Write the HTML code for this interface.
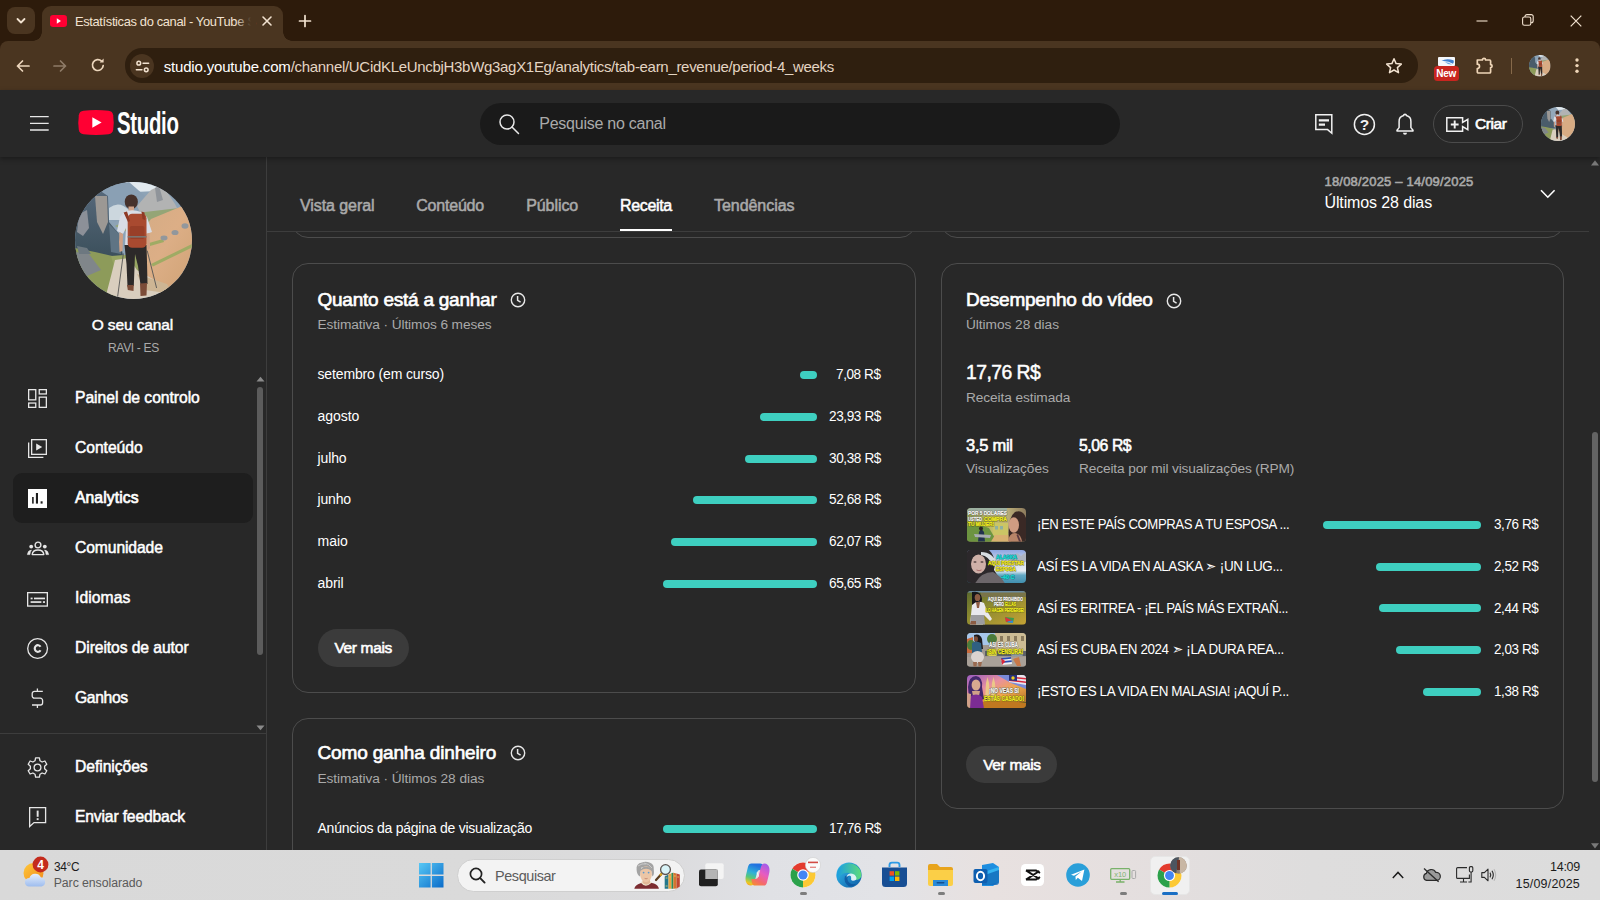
<!DOCTYPE html>
<html lang="pt">
<head>
<meta charset="utf-8">
<title>Estatísticas do canal - YouTube Studio</title>
<style>
*{box-sizing:border-box;margin:0;padding:0}
html,body{width:1600px;height:900px;overflow:hidden;background:#282828}
body{font-family:"Liberation Sans",sans-serif;color:#fff;position:relative;-webkit-font-smoothing:antialiased}
.abs{position:absolute}
.t{position:absolute;white-space:nowrap;line-height:1;transform-origin:0 50%}
svg{position:absolute;overflow:visible}
/* ---------- browser chrome ---------- */
#tabstrip{left:0;top:0;width:1600px;height:52px;background:#2d1b0b}
#toolbar{left:0;top:41px;width:1600px;height:49px;background:#4a3520;border-radius:8px 8px 0 0}
#tabsearch{left:7px;top:7px;width:28px;height:27px;border-radius:8px;background:#4a3520}
#tab{left:42px;top:6px;width:241px;height:36px;background:#4a3520;border-radius:9px 9px 0 0}
#tab:before,#tab:after{content:"";position:absolute;bottom:1px;width:9px;height:9px;background:radial-gradient(circle at 0 0,rgba(0,0,0,0) 8.5px,#4a3520 9px)}
#tab:before{left:-9px}
#tab:after{right:-9px;transform:scaleX(-1)}
#urlbar{left:125px;top:48.3px;width:1293px;height:34.4px;border-radius:17px;background:#2f1f0f}
#siteinfo{left:130px;top:54px;width:24px;height:24px;border-radius:12px;background:#4a3520}
/* ---------- yt header ---------- */
#ythead{left:0;top:90px;width:1600px;height:67px;background:#282828;box-shadow:0 2px 5px rgba(0,0,0,.35);z-index:5}
#search{left:480px;top:103px;width:640px;height:42px;border-radius:21px;background:#1a1a1a;z-index:6}
#criar{left:1433px;top:105px;width:90px;height:38px;border-radius:19px;border:1px solid #4b4b4b;z-index:6}
.z6{z-index:6}
/* ---------- sidebar ---------- */
#sidebar{left:0;top:157px;width:267px;height:693px;border-right:1px solid #3d3d3d;background:#282828}
#navsel{left:13px;top:473px;width:240px;height:49.6px;border-radius:9px;background:#1e1e1e}
#navdiv{left:0;top:733px;width:266px;height:1px;background:#3d3d3d}
.nav{font-size:15.7px;-webkit-text-stroke:.5px;color:#fff;left:75px;letter-spacing:-.35px}
/* ---------- content ---------- */
.card{position:absolute;border:1px solid #4c4c4c;border-radius:16px;background:#282828}
.h{font-size:19px;-webkit-text-stroke:.65px;letter-spacing:-.45px}
.sub{font-size:13.7px;color:#aaa;letter-spacing:-.1px}
.row{font-size:14px;color:#fff;letter-spacing:-.15px}
.val{font-size:14px;color:#fff;letter-spacing:-.3px;text-align:right}
.bar{position:absolute;height:8px;border-radius:4px;background:#3ecfc0}
.btn{position:absolute;height:38px;border-radius:19px;background:#3b3b3b}
.tab{font-size:16px;-webkit-text-stroke:.52px;color:#aaa;letter-spacing:-.4px}
.thumb{position:absolute;width:59px;height:33px;border-radius:4px;overflow:hidden}
/* ---------- taskbar ---------- */
#taskbar{left:0;top:850px;width:1600px;height:50px;background:linear-gradient(90deg,#d9d9d9 0,#dadada 30%,#dcdcde 42%,#e0e1e5 48%,#e2e3e7 55%,#e8e1e0 62%,#e5dfdf 70%,#dedddd 82%,#dcdcdc 100%)}
#tsearch{left:457px;top:858.6px;width:228.3px;height:33.1px;border-radius:17px;background:#f3f3f3;border:1px solid #cfcfcf}
.tk{color:#1b1b1b;font-size:12px}
</style>
</head>
<body>
<div class="abs" id="tabstrip"></div>
<div class="abs" id="toolbar"></div>
<div class="abs" id="tabsearch"></div>
<svg style="left:15px;top:15px" width="12" height="12" viewBox="0 0 12 12"><path d="M2.5 4 L6 7.5 L9.5 4" fill="none" stroke="#f2e2d0" stroke-width="1.8" stroke-linecap="round" stroke-linejoin="round"/></svg>
<div class="abs" id="tab"></div>
<svg style="left:50px;top:15px" width="17" height="12" viewBox="0 0 17 12"><rect x="0" y="0" width="17" height="12" rx="3.2" fill="#ff0033"/><path d="M6.8 3.3 L11 6 L6.8 8.7Z" fill="#fff"/></svg>
<span class="t" style="letter-spacing:-0.364px;transform:scaleX(0.9920);left:75px;top:14.5px;font-size:13px;color:#f2e2d0">Estatísticas do canal - YouTube</span><span class="t" style="left:247.5px;top:14.5px;font-size:13px;color:#f2e2d0">S</span>
<div class="abs" style="left:236px;top:10px;width:20px;height:24px;background:linear-gradient(90deg,rgba(74,53,32,0),#4a3520 75%)"></div>
<svg style="left:261px;top:15px" width="12" height="12" viewBox="0 0 12 12"><path d="M2 2 L10 10 M10 2 L2 10" fill="none" stroke="#f2e2d0" stroke-width="1.6" stroke-linecap="round"/></svg>
<svg style="left:298px;top:14px" width="14" height="14" viewBox="0 0 14 14"><path d="M7 1.5 V12.5 M1.5 7 H12.5" fill="none" stroke="#f2e2d0" stroke-width="1.7" stroke-linecap="round"/></svg>
<!-- window controls -->
<svg style="left:1476px;top:15px" width="12" height="12" viewBox="0 0 12 12"><path d="M0.5 6 H11.5" stroke="#f2e2d0" stroke-width="1.1"/></svg>
<svg style="left:1522px;top:14px" width="12" height="12" viewBox="0 0 12 12"><rect x="0.6" y="3" width="8.2" height="8.2" rx="1.8" fill="none" stroke="#f2e2d0" stroke-width="1.1"/><path d="M3 3 V2.6 A2 2 0 0 1 5 0.6 H9.2 A2 2 0 0 1 11.2 2.6 V6.8 A2 2 0 0 1 9.2 8.8 H8.8" fill="none" stroke="#f2e2d0" stroke-width="1.1"/></svg>
<svg style="left:1570px;top:15px" width="12" height="12" viewBox="0 0 12 12"><path d="M0.7 0.7 L11.3 11.3 M11.3 0.7 L0.7 11.3" stroke="#f2e2d0" stroke-width="1.2"/></svg>
<!-- nav buttons -->
<svg style="left:15px;top:58px" width="16" height="16" viewBox="0 0 16 16"><path d="M14 8 H2.5 M7.5 3 L2.5 8 L7.5 13" fill="none" stroke="#ecd6bc" stroke-width="1.7" stroke-linecap="round" stroke-linejoin="round"/></svg>
<svg style="left:52px;top:58px" width="16" height="16" viewBox="0 0 16 16"><path d="M2 8 H13.5 M8.5 3 L13.5 8 L8.5 13" fill="none" stroke="#8e7b67" stroke-width="1.7" stroke-linecap="round" stroke-linejoin="round"/></svg>
<svg style="left:90px;top:57px" width="16" height="16" viewBox="0 0 16 16"><path d="M13.2 8.6 A5.4 5.4 0 1 1 11.6 4.2" fill="none" stroke="#ecd6bc" stroke-width="1.7" stroke-linecap="round"/><path d="M13.6 1.6 V5.6 H9.6Z" fill="#ecd6bc"/></svg>
<div class="abs" id="urlbar"></div>
<div class="abs" id="siteinfo"></div>
<svg style="left:134.5px;top:59.5px" width="15" height="13" viewBox="0 0 16 14"><g fill="none" stroke="#f2e2d0" stroke-width="1.6" stroke-linecap="round"><circle cx="4" cy="3.4" r="2"/><path d="M8.6 3.4 H14.6"/><circle cx="12" cy="10.6" r="2"/><path d="M1.4 10.6 H7.4"/></g></svg>
<span class="t" style="letter-spacing:-0.171px;left:163.7px;top:58.5px;font-size:15px;color:#fff">studio.youtube.com</span><span class="t" style="letter-spacing:-0.305px;left:290.7px;top:58.5px;font-size:15px;color:#e4d5c3">/channel/UCidKLeUncbjH3bWg3agX1Eg/analytics/tab-earn_revenue/period-4_weeks</span>
<svg style="left:1385px;top:57px" width="18" height="18" viewBox="0 0 18 18"><path d="M9 1.8 L11.1 6.6 L16.3 7.1 L12.4 10.6 L13.5 15.7 L9 13 L4.5 15.7 L5.6 10.6 L1.7 7.1 L6.9 6.6Z" fill="none" stroke="#f2e2d0" stroke-width="1.5" stroke-linejoin="round"/></svg>
<!-- extension w/ New badge -->
<svg style="left:1438px;top:57.4px" width="17" height="9" viewBox="0 0 17 9"><rect width="17" height="9" rx="1" fill="#f4f7fb"/><path d="M3.500 4 Q8 0.800 15.500 3.200 Q16.500 5 15 6.800 Q10 3.400 3.500 4Z" fill="#3f7fd0"/><path d="M7 5 Q11 5.200 14 7.500 Q10 7.800 7 5Z" fill="#6aa6e6"/></svg>
<div class="abs" style="left:1433.700px;top:66px;width:25.500px;height:14.500px;border-radius:3.500px;background:#c9251f"></div>
<span class="t" style="letter-spacing:-0.254px;top:69.13px;left:1436.200px;font-size:10px;font-weight:bold;color:#fff">New</span>
<svg style="left:1475px;top:56px" width="20" height="19" viewBox="0 0 20 19"><path d="M2.300 4 H7.400 A1.600 1.600 0 0 1 10.600 4 H14.600 A1 1 0 0 1 15.600 5 V8.600 A1.500 1.500 0 0 1 15.600 11.600 V16 A1 1 0 0 1 14.600 17 H3.300 A1 1 0 0 1 2.300 16 V12.600 A2.200 2.200 0 0 0 2.300 8.200Z" fill="none" stroke="#efd6b8" stroke-width="1.700" stroke-linejoin="round"/></svg>
<div class="abs" style="left:1511px;top:57.500px;width:1px;height:16px;background:#86694a"></div>
<svg style="left:1529px;top:54.600px" width="21.500" height="21.500" viewBox="0 0 117 117"><defs><clipPath id="avc0"><circle cx="58.500" cy="58.500" r="58.500"/></clipPath></defs><g clip-path="url(#avc0)"><rect width="117" height="117" fill="#8da3b6"/><path d="M50 0 H84 L82 9 L60 10Z" fill="#e2eaef"/><path d="M62 24 L76 8 L84 4 L92 10 L100 22 L104 30 L70 40Z" fill="#b2b3b3"/><path d="M40 44 L70 30 L104 26 L110 34 L76 40 L56 52Z" fill="#94a576"/><path d="M0 12 L24 8 L33 14 L34 40 L44 52 L48 74 L0 74Z" fill="#4a5c6a"/><path d="M117 20 L76 37 L62 56 L58 88 L82 110 L100 117 L117 117Z" fill="#d8ac84"/><path d="M0 66 L20 70 L46 76 L52 90 L40 117 H0Z" fill="#8d9b5a"/><path d="M30 117 L36 94 L40 78 L54 76 L62 88 L90 104 L96 117Z" fill="#d9cebe"/><use href="#hiker"/></g></svg>
<svg style="left:1574px;top:57px" width="6" height="18" viewBox="0 0 6 18"><g fill="#efd6b8"><circle cx="3" cy="3" r="1.700"/><circle cx="3" cy="8.600" r="1.700"/><circle cx="3" cy="14.300" r="1.700"/></g></svg>

<div class="abs" id="ythead"></div>
<svg class="z6" style="left:30px;top:115px" width="19" height="16" viewBox="0 0 19 16"><path d="M0 1.7 H18.7 M0 8.3 H18.7 M0 15 H18.7" stroke="#e8e8e8" stroke-width="1.3"/></svg>
<svg class="z6" style="left:78px;top:110px" width="36" height="25" viewBox="0 0 36 25"><path d="M5.5 0.8 Q18 -0.6 30.5 0.8 Q34.6 1.3 35.2 5.2 Q36.2 12.5 35.2 19.8 Q34.6 23.7 30.5 24.2 Q18 25.6 5.5 24.2 Q1.4 23.7 0.8 19.8 Q-0.2 12.5 0.8 5.2 Q1.4 1.3 5.5 0.8Z" fill="#ff0033"/><path d="M14.3 7.2 L23.6 12.5 L14.3 17.8Z" fill="#fff"/></svg>
<span class="t z6" id="studio" style="left:117.3px;top:108.4px;font-size:30.5px;font-weight:bold;color:#fff;transform:scaleX(.67);letter-spacing:-.5px">Studio</span>
<div class="abs" id="search"></div>
<svg class="z6" style="left:498px;top:113px" width="22" height="22" viewBox="0 0 22 22"><circle cx="9" cy="9" r="7" fill="none" stroke="#e8e8e8" stroke-width="1.5"/><path d="M14 14 L20.5 20.5" stroke="#e8e8e8" stroke-width="1.5" stroke-linecap="round"/></svg>
<span class="t z6" style="letter-spacing:-0.251px;left:539.3px;top:116px;font-size:16px;color:#aaa">Pesquise no canal</span>
<!-- comment icon -->
<svg class="z6" style="left:1315px;top:113.6px" width="18" height="21" viewBox="0 0 18 21"><path d="M0.8 0.8 H16.8 V19.2 L12.6 15.6 H0.8Z" fill="none" stroke="#f1f1f1" stroke-width="1.5" stroke-linejoin="miter"/><path d="M3.800 6.400 H14 M3.800 10.600 H10" stroke="#f1f1f1" stroke-width="2.200"/></svg>
<!-- help -->
<svg class="z6" style="left:1353px;top:113px" width="23" height="23" viewBox="0 0 23 23"><circle cx="11.4" cy="11.4" r="10" fill="none" stroke="#f1f1f1" stroke-width="1.5"/><text x="11.4" y="17" text-anchor="middle" font-family="Liberation Sans, sans-serif" font-weight="bold" font-size="15.5" fill="#f1f1f1">?</text></svg>
<!-- bell -->
<svg class="z6" style="left:1396px;top:113px" width="18" height="23" viewBox="0 0 18 23"><path d="M9 1.2 A1.3 1.3 0 0 1 10.3 2.6 A6 6 0 0 1 14.9 8.6 V14.6 L17 17.2 V18 H1 V17.2 L3.1 14.6 V8.6 A6 6 0 0 1 7.7 2.6 A1.3 1.3 0 0 1 9 1.2Z" fill="none" stroke="#f1f1f1" stroke-width="1.5" stroke-linejoin="round"/><path d="M7 19.8 A2 2 0 0 0 11 19.8Z" fill="#f1f1f1"/></svg>
<div class="abs" id="criar"></div>
<svg class="z6" style="left:1446px;top:117px" width="23" height="15" viewBox="0 0 23 15"><path d="M0.8 0.8 H16.6 V5.4 L21.8 2.4 V12.6 L16.6 9.6 V14.2 H0.8Z" fill="none" stroke="#f1f1f1" stroke-width="1.5" stroke-linejoin="miter"/><path d="M8.7 3.6 V11.4 M4.8 7.5 H12.6" stroke="#f1f1f1" stroke-width="1.9"/></svg>
<span class="t z6" style="letter-spacing:-0.434px;left:1475px;top:116.3px;font-size:15.5px;-webkit-text-stroke:.6px;color:#fff">Criar</span>
<svg class="z6" style="left:1540.500px;top:107px" width="34" height="34" viewBox="0 0 117 117"><defs><clipPath id="avc"><circle cx="58.500" cy="58.500" r="58.500"/></clipPath></defs><g clip-path="url(#avc)"><rect width="117" height="117" fill="#93a8ba"/><path d="M50 0 H84 L82 9 L60 10Z" fill="#e2eaef"/><path d="M62 24 L76 8 L84 4 L92 10 L100 22 L104 30 L70 40Z" fill="#b2b3b3"/><path d="M40 44 L70 30 L104 26 L110 34 L76 40 L56 52Z" fill="#94a576"/><path d="M0 12 L24 8 L33 14 L34 40 L44 52 L48 74 L0 74Z" fill="#4a5c6a"/><path d="M20 14 L32 14 L33 40 L28 52 L22 40Z" fill="#9c9894"/><path d="M117 20 L76 37 L62 56 L58 88 L82 110 L100 117 L117 117Z" fill="#d8ac84"/><path d="M0 66 L20 70 L46 76 L52 90 L40 117 H0Z" fill="#8d9b5a"/><path d="M0 70 L14 72 L26 88 L12 94 L0 90Z" fill="#80868a"/><path d="M30 117 L36 94 L40 78 L54 76 L62 88 L90 104 L96 117Z" fill="#d9cebe"/><use href="#hiker"/></g></svg>

<div class="abs" id="sidebar"></div>
<!-- channel avatar -->
<svg style="left:75px;top:181.5px" width="117" height="117" viewBox="0 0 117 117"><defs><clipPath id="avc2"><circle cx="58.5" cy="58.5" r="58.5"/></clipPath><linearGradient id="slope" x1="0" y1="0" x2="1" y2="1"><stop offset="0" stop-color="#d2ab85"/><stop offset=".5" stop-color="#dcae86"/><stop offset="1" stop-color="#cfa274"/></linearGradient><linearGradient id="cliff" x1="0" y1="0" x2="0" y2="1"><stop offset="0" stop-color="#56687a"/><stop offset="1" stop-color="#3c505c"/></linearGradient><g id="hiker"><ellipse cx="56.300" cy="19.800" rx="6.600" ry="7.400" fill="#46322c"/><rect x="53.500" y="24.500" width="5.500" height="5" fill="#d2a48a"/><path d="M49 30 Q57 26.500 66 30 L72 35 L77 50 L71.500 52 L70 44 L70 64 H50 L51 46 L48 52 L42 49 L45 35Z" fill="#d9dde6"/><path d="M44.500 50 L48 52 L47.500 69 L44.500 70 L44 60Z M71.800 51.500 L74.400 51 L75 66 L72.500 68.600Z" fill="#cfa085"/><path d="M49.500 63 H71.500 L72 80 L72.500 102 L65.500 103 L63 84 L60 72 L58.800 104 L52.500 104.500 L51.500 82Z" fill="#2c2929"/><path d="M52 103 H58.800 L58.500 109 L52.800 108Z M65 101.500 L72 101 L71.500 113.500 L65.500 114Z" fill="#7c4c38"/><rect x="52.700" y="31.800" width="18.800" height="33.900" rx="4.500" fill="#a94a30"/><rect x="54.700" y="44" width="14.800" height="13" rx="2" fill="#983f28"/><rect x="52.700" y="54" width="18.800" height="1.600" fill="#7a7470"/><path d="M48.600 30.500 L52 29.500 L55 39 L53 40Z M66.500 29.500 L69.500 30.500 L70 38 L67.500 37Z" fill="#8e3a26"/></g></defs><g clip-path="url(#avc2)"><rect width="117" height="117" fill="#8da3b6"/><path d="M50 0 H84 L82 9 L60 10Z" fill="#e2eaef"/><path d="M28 4 L54 0 L70 14 L62 30 L40 40 L28 34Z" fill="#8aa0b4"/><path d="M34 26 Q44 18 54 28 L52 38 L34 38Z" fill="#ccd7de"/><path d="M62 24 L76 8 L84 4 L92 10 L100 22 L104 30 L70 40Z" fill="#b2b3b3"/><path d="M80 6 L84 4 L88 18 L82 20Z" fill="#8f949a"/><path d="M40 44 L70 30 L104 26 L110 34 L76 40 L56 52Z" fill="#94a576"/><path d="M0 12 L24 8 L33 14 L34 40 L44 52 L48 74 L0 74Z" fill="url(#cliff)"/><path d="M20 14 L32 14 L33 40 L28 52 L22 40Z" fill="#9c9894"/><path d="M4 32 L12 28 L14 46 L8 54 L2 50Z" fill="#8c9098"/><path d="M34 42 L44 52 L46 72 L36 70Z" fill="#5f7484"/><path d="M117 20 L76 37 L62 56 L58 88 L82 110 L100 117 L117 117Z" fill="url(#slope)"/><path d="M76 82 L117 62 V65.500 L78 84.500Z" fill="#9fab64"/><path d="M74 61 L88 57 L89 60 L75 64Z" fill="#9fab64"/><ellipse cx="110" cy="44" rx="3.500" ry="2.800" fill="#92979c"/><ellipse cx="100" cy="50.500" rx="3.500" ry="2.600" fill="#92979c"/><ellipse cx="89" cy="56" rx="3.500" ry="2.400" fill="#92979c"/><path d="M0 66 L20 70 L46 76 L52 90 L40 117 H0Z" fill="#8d9b5a"/><path d="M36 74 L62 72 L66 90 L40 88Z" fill="#97a562"/><path d="M0 70 L14 72 L26 88 L12 94 L0 90Z" fill="#80868a"/><path d="M2 64 L12 66 L16 72 L4 72Z" fill="#6d7880"/><path d="M30 117 L36 94 L40 78 L54 76 L62 88 L90 104 L96 117Z" fill="#d9cebe"/><path d="M62 92 L92 102 L98 112 L70 108Z" fill="#cdb594"/><path d="M48.400 71.500 L42.600 114.800 M72.200 68.600 L81.600 106" stroke="#555" stroke-width=".9"/><use href="#hiker"/></g></svg>
<span class="t" style="letter-spacing:-0.120px;top:317.38px;left:91.7px;font-size:15.5px;-webkit-text-stroke:.45px;color:#fff">O seu canal</span>
<span class="t" style="letter-spacing:-0.364px;transform:scaleX(0.9254);top:341.40px;left:107.5px;font-size:13px;color:#aaa">RAVI - ES</span>
<!-- sidebar scrollbar -->
<svg style="left:256px;top:376px" width="9" height="6" viewBox="0 0 9 6"><path d="M0.5 5.5 L4.5 0.8 L8.5 5.5Z" fill="#8a8a8a"/></svg>
<div class="abs" style="left:257px;top:387px;width:6px;height:268px;border-radius:3px;background:#5c5c5c"></div>
<svg style="left:256px;top:725px" width="9" height="6" viewBox="0 0 9 6"><path d="M0.5 0.5 L4.5 5.2 L8.5 0.5Z" fill="#8a8a8a"/></svg>
<div class="abs" id="navsel"></div>
<div class="abs" id="navdiv"></div>
<!-- icons -->
<svg style="left:28px;top:389px" width="19" height="19" viewBox="0 0 19 19"><g fill="none" stroke="#e6e6e6" stroke-width="1.3"><rect x="0.65" y="0.65" width="7.1" height="10.2"/><rect x="11.25" y="0.65" width="7.1" height="4.3"/><rect x="0.65" y="14.05" width="7.1" height="4.3"/><rect x="11.25" y="8.15" width="7.1" height="10.2"/></g></svg>
<svg style="left:28px;top:439px" width="19" height="19" viewBox="0 0 19 19"><g fill="none" stroke="#e6e6e6" stroke-width="1.3"><rect x="3.65" y="0.65" width="14.7" height="14.7"/><path d="M0.65 3.6 V18.35 H15.4"/></g><path d="M8.2 4.4 L14.2 8 L8.2 11.6Z" fill="#e6e6e6"/></svg>
<svg style="left:28px;top:489px" width="19" height="19" viewBox="0 0 19 19"><rect width="19" height="19" fill="#fff"/><rect x="4.1" y="8" width="1.6" height="6.6" fill="#1e1e1e"/><rect x="7.9" y="4" width="2.1" height="10.6" fill="#1e1e1e"/><rect x="12.6" y="12.3" width="2" height="2.3" fill="#1e1e1e"/></svg>
<svg style="left:27px;top:541px" width="22" height="15" viewBox="0 0 22 15"><g fill="none" stroke="#e6e6e6" stroke-width="1.4"><circle cx="11" cy="4" r="2.9"/><path d="M5.2 13.6 Q5.6 9 11 9 Q16.4 9 16.8 13.6Z" stroke-linejoin="round"/></g><circle cx="4.2" cy="5.6" r="1.9" fill="#e6e6e6"/><circle cx="17.8" cy="5.6" r="1.9" fill="#e6e6e6"/><path d="M0.4 13.6 Q0.8 9.4 4.4 9 Q3 11 2.9 13.6Z M21.6 13.6 Q21.2 9.4 17.6 9 Q19 11 19.1 13.6Z" fill="#e6e6e6" stroke="#e6e6e6" stroke-width=".6"/></svg>
<svg style="left:27px;top:592px" width="21" height="15" viewBox="0 0 21 15"><rect x="0.65" y="0.65" width="19.7" height="13.4" fill="none" stroke="#e6e6e6" stroke-width="1.3"/><g fill="#e6e6e6"><rect x="3.6" y="5.6" width="2" height="1.7"/><rect x="7" y="5.6" width="11" height="1.7"/><rect x="3.6" y="9.2" width="10.8" height="1.7"/><rect x="15.9" y="9.2" width="2.1" height="1.7"/></g></svg>
<svg style="left:27px;top:638px" width="22" height="22" viewBox="0 0 22 22"><circle cx="10.6" cy="10.5" r="9.9" fill="none" stroke="#e6e6e6" stroke-width="1.3"/><path d="M13.500 8.800 A3.100 3.300 0 1 0 13.500 12.200" fill="none" stroke="#e6e6e6" stroke-width="2.200"/></svg>
<svg style="left:31px;top:688px" width="13" height="21" viewBox="0 0 13 21"><path d="M11.8 3.4 H3.4 A2.2 2.2 0 0 0 1.2 5.6 V8 A2.2 2.2 0 0 0 3.4 10.2 H9.4 A2.2 2.2 0 0 1 11.6 12.4 V14.8 A2.2 2.2 0 0 1 9.4 17 H1 M6.4 0.6 V3.4 M6.4 17 V20" fill="none" stroke="#e6e6e6" stroke-width="1.3"/></svg>
<svg style="left:27px;top:757px" width="21" height="22" viewBox="-10.5 -11 21 22"><path id="gear" fill="none" stroke="#e6e6e6" stroke-width="1.3" stroke-linejoin="round" d="M-1.9 -10.1 H1.9 L2.5 -7.2 L4.6 -6 L7.4 -7 L9.3 -3.7 L7.1 -1.7 V0.7 L9.3 2.7 L7.4 6 L4.6 5 L2.5 6.2 L1.9 9.1 H-1.9 L-2.5 6.2 L-4.6 5 L-7.4 6 L-9.3 2.7 L-7.1 0.7 V-1.7 L-9.3 -3.7 L-7.4 -7 L-4.6 -6 L-2.5 -7.2Z"/><circle cx="0" cy="-0.5" r="3.4" fill="none" stroke="#e6e6e6" stroke-width="1.3"/></svg>
<svg style="left:29px;top:807px" width="18" height="21" viewBox="0 0 18 21"><path d="M0.65 0.65 H16.6 V15.6 H5 L0.65 19.6Z" fill="none" stroke="#e6e6e6" stroke-width="1.3"/><rect x="7.7" y="3.6" width="1.9" height="6.2" fill="#e6e6e6"/><rect x="7.7" y="11.2" width="1.9" height="1.9" fill="#e6e6e6"/></svg>
<!-- labels -->
<span class="t nav" style="letter-spacing:-0.044px;top:390.31px">Painel de controlo</span>
<span class="t nav" style="letter-spacing:-0.056px;top:440.31px">Conteúdo</span>
<span class="t nav" style="letter-spacing:0.091px;top:490.31px;-webkit-text-stroke:.7px">Analytics</span>
<span class="t nav" style="letter-spacing:-0.117px;top:540.31px">Comunidade</span>
<span class="t nav" style="letter-spacing:0.066px;top:590.31px">Idiomas</span>
<span class="t nav" style="letter-spacing:-0.089px;top:640.31px">Direitos de autor</span>
<span class="t nav" style="letter-spacing:-0.359px;top:690.21px">Ganhos</span>
<span class="t nav" style="letter-spacing:-0.065px;top:759.21px">Definições</span>
<span class="t nav" style="letter-spacing:-0.167px;top:809.31px">Enviar feedback</span>

<div class="abs" style="left:267px;top:232px;width:1322px;height:10px;overflow:hidden"><div class="card" style="left:24.5px;top:-60px;width:624.3px;height:66px"></div><div class="card" style="left:674px;top:-60px;width:623px;height:66px"></div></div>
<div class="abs" style="left:267px;top:231px;width:1322px;height:1px;background:#3d3d3d"></div>
<span class="t tab" style="letter-spacing:-0.074px;top:198.06px;left:300px;">Vista geral</span>
<span class="t tab" style="letter-spacing:-0.199px;top:198.06px;left:416.2px;">Conteúdo</span>
<span class="t tab" style="letter-spacing:-0.069px;top:198.06px;left:526.2px;">Público</span>
<span class="t tab" style="letter-spacing:-0.350px;top:198.06px;left:620px;color:#fff;">Receita</span>
<span class="t tab" style="letter-spacing:-0.045px;top:198.06px;left:714px;">Tendências</span>
<div class="abs" style="left:620px;top:228.6px;width:52px;height:2.6px;background:#fff"></div>
<span class="t" style="letter-spacing:0.192px;top:174.60px;left:1324.5px;font-size:13px;-webkit-text-stroke:.58px;color:#aaa">18/08/2025 – 14/09/2025</span>
<span class="t" style="letter-spacing:-0.125px;top:194.86px;left:1324.5px;font-size:16px;color:#fff">Últimos 28 dias</span>
<svg style="left:1540px;top:189px" width="16" height="10" viewBox="0 0 16 10"><path d="M1 1.2 L7.8 8.2 L14.6 1.2" fill="none" stroke="#fff" stroke-width="1.6"/></svg>
<svg style="left:1591px;top:160px" width="8" height="6" viewBox="0 0 8 6"><path d="M0 5.5 L4 0.3 L8 5.5Z" fill="#7a7a7a"/></svg>
<div class="abs" style="left:1592px;top:431.5px;width:6px;height:350px;border-radius:3px;background:#636363"></div>
<svg style="left:1591px;top:843px" width="8" height="6" viewBox="0 0 8 6"><path d="M0 0.3 L4 5.6 L8 0.3Z" fill="#7a7a7a"/></svg>
<div class="card" style="left:291.5px;top:263px;width:624.3px;height:429.6px"></div>
<span class="t h" style="letter-spacing:-0.241px;top:289.72px;left:317.5px">Quanto está a ganhar</span>
<svg style="left:509.5px;top:292.3px" width="16" height="16" viewBox="0 0 16 16"><circle cx="8" cy="8" r="6.7" fill="none" stroke="#e8e8e8" stroke-width="1.4"/><path d="M7.6 4 V8.4 L10.6 10.2" fill="none" stroke="#e8e8e8" stroke-width="1.5"/></svg>
<span class="t sub" style="letter-spacing:-0.088px;top:317.70px;left:317.5px">Estimativa · Últimos 6 meses</span>
<span class="t row" style="letter-spacing:-0.140px;top:367.05px;left:317.5px">setembro (em curso)</span>
<div class="bar" style="left:800px;top:371.0px;width:17px"></div>
<span class="t val" style="letter-spacing:-0.420px;transform:scaleX(0.9673);top:367.05px;left:836.3px">7,08 R$</span>
<span class="t row" style="letter-spacing:-0.058px;top:408.85px;left:317.5px">agosto</span>
<div class="bar" style="left:760px;top:412.8px;width:57px"></div>
<span class="t val" style="letter-spacing:-0.420px;transform:scaleX(0.9725);top:408.85px;left:828.9px">23,93 R$</span>
<span class="t row" style="letter-spacing:-0.119px;top:450.65px;left:317.5px">julho</span>
<div class="bar" style="left:745px;top:454.6px;width:72px"></div>
<span class="t val" style="letter-spacing:-0.420px;transform:scaleX(0.9725);top:450.65px;left:828.9px">30,38 R$</span>
<span class="t row" style="letter-spacing:-0.153px;top:492.35px;left:317.5px">junho</span>
<div class="bar" style="left:693px;top:496.3px;width:124px"></div>
<span class="t val" style="letter-spacing:-0.420px;transform:scaleX(0.9725);top:492.35px;left:828.9px">52,68 R$</span>
<span class="t row" style="letter-spacing:-0.015px;top:534.15px;left:317.5px">maio</span>
<div class="bar" style="left:671px;top:538.1px;width:146px"></div>
<span class="t val" style="letter-spacing:-0.420px;transform:scaleX(0.9725);top:534.15px;left:828.9px">62,07 R$</span>
<span class="t row" style="letter-spacing:-0.094px;top:575.95px;left:317.5px">abril</span>
<div class="bar" style="left:663px;top:579.9px;width:154px"></div>
<span class="t val" style="letter-spacing:-0.420px;transform:scaleX(0.9725);top:575.95px;left:828.9px">65,65 R$</span>
<div class="btn" style="left:317.5px;top:629px;width:91px;height:37.5px"></div>
<span class="t" style="letter-spacing:-0.339px;top:640.28px;left:334.4px;font-size:15.5px;-webkit-text-stroke:.58px">Ver mais</span>
<div class="abs" style="left:267px;top:700px;width:1322px;height:150px;overflow:hidden"><div class="card" style="left:24.5px;top:17.6px;width:624.3px;height:429px"></div></div>
<span class="t h" style="letter-spacing:-0.163px;top:743.22px;left:317.5px">Como ganha dinheiro</span>
<svg style="left:509.5px;top:745px" width="16" height="16" viewBox="0 0 16 16"><circle cx="8" cy="8" r="6.7" fill="none" stroke="#e8e8e8" stroke-width="1.4"/><path d="M7.6 4 V8.4 L10.6 10.2" fill="none" stroke="#e8e8e8" stroke-width="1.5"/></svg>
<span class="t sub" style="letter-spacing:-0.078px;top:772.40px;left:317.5px">Estimativa · Últimos 28 dias</span>
<span class="t row" style="letter-spacing:-0.233px;top:821.35px;left:317.5px">Anúncios da página de visualização</span>
<div class="bar" style="left:663px;top:824.7px;width:154px"></div>
<span class="t val" style="letter-spacing:-0.420px;transform:scaleX(0.9725);top:821.35px;left:828.9px">17,76 R$</span>
<div class="card" style="left:941px;top:263px;width:623px;height:546px"></div>
<span class="t h" style="letter-spacing:-0.236px;top:289.72px;left:966px">Desempenho do vídeo</span>
<svg style="left:1165.5px;top:292.5px" width="16" height="16" viewBox="0 0 16 16"><circle cx="8" cy="8" r="6.7" fill="none" stroke="#e8e8e8" stroke-width="1.4"/><path d="M7.6 4 V8.4 L10.6 10.2" fill="none" stroke="#e8e8e8" stroke-width="1.5"/></svg>
<span class="t sub" style="letter-spacing:-0.039px;top:317.70px;left:966px">Últimos 28 dias</span>
<span class="t" style="letter-spacing:-0.588px;transform:scaleX(0.9214);top:360.62px;left:966px;font-size:21px;-webkit-text-stroke:.5px">17,76 R$</span>
<span class="t sub" style="letter-spacing:-0.098px;top:391.00px;left:966px">Receita estimada</span>
<span class="t" style="letter-spacing:-0.273px;top:436.63px;left:966px;font-size:16.5px;-webkit-text-stroke:.58px">3,5 mil</span>
<span class="t" style="letter-spacing:-0.462px;transform:scaleX(0.9567);top:436.63px;left:1079px;font-size:16.5px;-webkit-text-stroke:.58px">5,06 R$</span>
<span class="t sub" style="letter-spacing:-0.050px;top:461.80px;left:966px">Visualizações</span>
<span class="t sub" style="letter-spacing:-0.132px;top:461.80px;left:1079px">Receita por mil visualizações (RPM)</span>
<div class="thumb" style="left:966.7px;top:508.1px;height:33.6px"><svg style="left:0;top:0" width="59" height="33.6" viewBox="0 0 59 33.6" preserveAspectRatio="none"><defs><linearGradient id="t1" x1="0" y1="0" x2="1" y2="0"><stop offset="0" stop-color="#8a9a4c"/><stop offset=".45" stop-color="#c4bf6c"/><stop offset=".7" stop-color="#b9ac78"/><stop offset="1" stop-color="#8c7a5c"/></linearGradient></defs><rect width="59" height="33.6" fill="url(#t1)"/><rect x="0" y="0" width="40" height="5" fill="#9db0a0"/><path d="M0 18 L10 16 L22 20 L30 33.600 H0Z" fill="#6c9440"/><rect x="26" y="15" width="15" height="12" fill="#cbc565"/><rect x="28" y="18" width="3" height="3.500" fill="#8fb0a0"/><rect x="33" y="18" width="3" height="3.500" fill="#8fb0a0"/><path d="M28 27 L42 27 L44 33.600 H24Z" fill="#d8b070"/><path d="M11 33.600 L12 24 Q14 19 17 24 L18 33.600Z" fill="#22324e"/><circle cx="14" cy="20.500" r="2" fill="#2a2320"/><path d="M7 26 L24 27 L23 30 L8 29Z" fill="#a8adb2"/><path d="M42 33.600 Q40 10 48 4 Q56 1 59 10 V33.600Z" fill="#3a2925"/><ellipse cx="46.800" cy="17" rx="5.200" ry="7.800" fill="#cf9c82"/><path d="M41 33.600 Q42 25 48 25 Q54 26 55 33.600Z" fill="#b88468"/><path d="M51 26 L54 33.600 H52 L49.500 27Z" fill="#5a3a40"/><text x="1" y="7" textLength="39" lengthAdjust="spacingAndGlyphs" font-family="Liberation Sans, sans-serif" font-weight="bold" font-size="5.75" fill="#1a1a10" stroke="#1a1a10" stroke-width="1.1" stroke-linejoin="round" opacity=".75">POR 5 DOLARES</text><text x="1" y="7" textLength="39" lengthAdjust="spacingAndGlyphs" font-family="Liberation Sans, sans-serif" font-weight="bold" font-size="5.75" fill="#f4f4f0" stroke="#f4f4f0" stroke-width=".35">POR 5 DOLARES</text><text x="1" y="12.6" textLength="14" lengthAdjust="spacingAndGlyphs" font-family="Liberation Sans, sans-serif" font-weight="bold" font-size="5.75" fill="#1a1a10" stroke="#1a1a10" stroke-width="1.1" stroke-linejoin="round" opacity=".75">USTED</text><text x="1" y="12.6" textLength="14" lengthAdjust="spacingAndGlyphs" font-family="Liberation Sans, sans-serif" font-weight="bold" font-size="5.75" fill="#f4f4f0" stroke="#f4f4f0" stroke-width=".35">USTED</text><text x="17" y="12.6" textLength="23" lengthAdjust="spacingAndGlyphs" font-family="Liberation Sans, sans-serif" font-weight="bold" font-size="5.75" fill="#1a1a10" stroke="#1a1a10" stroke-width="1.1" stroke-linejoin="round" opacity=".75">COMPRA</text><text x="17" y="12.6" textLength="23" lengthAdjust="spacingAndGlyphs" font-family="Liberation Sans, sans-serif" font-weight="bold" font-size="5.75" fill="#f0ec20" stroke="#f0ec20" stroke-width=".35">COMPRA</text><text x="1" y="18" textLength="26" lengthAdjust="spacingAndGlyphs" font-family="Liberation Sans, sans-serif" font-weight="bold" font-size="5.75" fill="#1a1a10" stroke="#1a1a10" stroke-width="1.1" stroke-linejoin="round" opacity=".75">TU MUJER!</text><text x="1" y="18" textLength="26" lengthAdjust="spacingAndGlyphs" font-family="Liberation Sans, sans-serif" font-weight="bold" font-size="5.75" fill="#f0ec20" stroke="#f0ec20" stroke-width=".35">TU MUJER!</text></svg></div>
<span class="t row" style="letter-spacing:-0.420px;transform:scaleX(0.9390);top:517.35px;left:1037px">¡EN ESTE PAÍS COMPRAS A TU ESPOSA ...</span>
<div class="bar" style="left:1323px;top:520.9px;width:157.8px"></div>
<span class="t val" style="letter-spacing:-0.420px;transform:scaleX(0.9608);top:517.35px;left:1493.7px">3,76 R$</span>
<div class="thumb" style="left:966.7px;top:549.8px;height:33.6px"><svg style="left:0;top:0" width="59" height="33.6" viewBox="0 0 59 33.6" preserveAspectRatio="none"><defs><linearGradient id="t2" x1="0" y1="0" x2="0" y2="1"><stop offset="0" stop-color="#8ea6e2"/><stop offset=".35" stop-color="#d4dcec"/><stop offset=".62" stop-color="#e6ecf2"/><stop offset=".75" stop-color="#62a8c4"/><stop offset="1" stop-color="#3f8fae"/></linearGradient></defs><rect width="59" height="33.600" fill="url(#t2)"/><path d="M44 8 L50 3 L54 6 L59 2 V12 L44 12Z" fill="#aeb4c0"/><path d="M0 0 H22 Q30 8 27 20 L36 33.600 H0Z" fill="#2c282b"/><path d="M14 2 Q26 2 30 14 L26 16 Q22 6 14 5Z" fill="#d9dce2"/><ellipse cx="11.500" cy="14" rx="7.500" ry="9.500" fill="#cfb0a8"/><path d="M0 0 H12 Q4 6 3 16 Q3 24 8 30 L0 33.600Z" fill="#2c282b"/><path d="M8 33.600 Q14 22 26 22 Q34 26 38 33.600Z" fill="#6c666a"/><ellipse cx="8" cy="12" rx="1.600" ry=".7" fill="#4a3a3a"/><ellipse cx="15" cy="12" rx="1.600" ry=".7" fill="#4a3a3a"/><path d="M9.500 20 Q12 21.500 14.500 20" stroke="#a86a6a" stroke-width="1" fill="none"/><text x="29" y="9.5" textLength="21" lengthAdjust="spacingAndGlyphs" font-family="Liberation Sans, sans-serif" font-weight="bold" font-size="6.21" fill="#0a5a60" stroke="#0a5a60" stroke-width="1.1" stroke-linejoin="round" opacity=".75">ALASKA</text><text x="29" y="9.5" textLength="21" lengthAdjust="spacingAndGlyphs" font-family="Liberation Sans, sans-serif" font-weight="bold" font-size="6.21" fill="#18d6d0" stroke="#18d6d0" stroke-width=".35">ALASKA</text><text x="21" y="15.2" textLength="36" lengthAdjust="spacingAndGlyphs" font-family="Liberation Sans, sans-serif" font-weight="bold" font-size="6.21" fill="#1a1a10" stroke="#1a1a10" stroke-width="1.1" stroke-linejoin="round" opacity=".75">AQUI PRESTAR</text><text x="21" y="15.2" textLength="36" lengthAdjust="spacingAndGlyphs" font-family="Liberation Sans, sans-serif" font-weight="bold" font-size="6.21" fill="#f2ea1a" stroke="#f2ea1a" stroke-width=".35">AQUI PRESTAR</text><text x="29" y="20.8" textLength="20" lengthAdjust="spacingAndGlyphs" font-family="Liberation Sans, sans-serif" font-weight="bold" font-size="6.21" fill="#1a1a10" stroke="#1a1a10" stroke-width="1.1" stroke-linejoin="round" opacity=".75">ESPOSA</text><text x="29" y="20.8" textLength="20" lengthAdjust="spacingAndGlyphs" font-family="Liberation Sans, sans-serif" font-weight="bold" font-size="6.21" fill="#f2ea1a" stroke="#f2ea1a" stroke-width=".35">ESPOSA</text><text x="34" y="29.5" textLength="13.5" lengthAdjust="spacingAndGlyphs" font-family="Liberation Sans, sans-serif" font-weight="bold" font-size="6.21" fill="#0a5a60" stroke="#0a5a60" stroke-width="1.1" stroke-linejoin="round" opacity=".75">-40 C</text><text x="34" y="29.5" textLength="13.5" lengthAdjust="spacingAndGlyphs" font-family="Liberation Sans, sans-serif" font-weight="bold" font-size="6.21" fill="#18d6d0" stroke="#18d6d0" stroke-width=".35">-40 C</text></svg></div>
<span class="t row" style="letter-spacing:-0.420px;transform:scaleX(0.9635);top:559.05px;left:1037px">ASÍ ES LA VIDA EN ALASKA ➣ ¡UN LUG...</span>
<div class="bar" style="left:1375.8px;top:562.6px;width:105.0px"></div>
<span class="t val" style="letter-spacing:-0.420px;transform:scaleX(0.9608);top:559.05px;left:1493.7px">2,52 R$</span>
<div class="thumb" style="left:966.7px;top:591.4px;height:33.6px"><svg style="left:0;top:0" width="59" height="33.6" viewBox="0 0 59 33.6" preserveAspectRatio="none"><defs><linearGradient id="t3" x1="0" y1="0" x2="1" y2="1"><stop offset="0" stop-color="#59682c"/><stop offset=".4" stop-color="#8c8a30"/><stop offset="1" stop-color="#c4a234"/></linearGradient></defs><rect width="59" height="33.600" fill="url(#t3)"/><rect x="14" y="0" width="45" height="6" fill="#7a7448"/><rect x="0" y="0" width="59" height="1.500" fill="#6a8aa0"/><path d="M5 1 Q14 -1 15 8 L14 14 H5Z" fill="#17171a"/><ellipse cx="10.500" cy="6.500" rx="2.800" ry="3.600" fill="#8c5c44"/><path d="M3 33.600 L5 14 Q10 9 17 12 L20 20 L25 28 L23 30 L17 24 L16 33.600Z" fill="#e9e9ee"/><path d="M9 11 L13 11 L12 17 L10 17Z" fill="#8c5c44"/><path d="M4 24 H17 L18 33.600 H3Z" fill="#9c9ca0"/><path d="M4 30 H9 V33.600 H3Z" fill="#8c5c44"/><text x="21" y="10" textLength="35" lengthAdjust="spacingAndGlyphs" font-family="Liberation Sans, sans-serif" font-weight="bold" font-size="5.289999999999999" fill="#1a1a10" stroke="#1a1a10" stroke-width="1.1" stroke-linejoin="round" opacity=".75">AQUI ES PROHIBIDO</text><text x="21" y="10" textLength="35" lengthAdjust="spacingAndGlyphs" font-family="Liberation Sans, sans-serif" font-weight="bold" font-size="5.289999999999999" fill="#f4f4f0" stroke="#f4f4f0" stroke-width=".35">AQUI ES PROHIBIDO</text><text x="27" y="15.5" textLength="10" lengthAdjust="spacingAndGlyphs" font-family="Liberation Sans, sans-serif" font-weight="bold" font-size="5.289999999999999" fill="#1a1a10" stroke="#1a1a10" stroke-width="1.1" stroke-linejoin="round" opacity=".75">PERO</text><text x="27" y="15.5" textLength="10" lengthAdjust="spacingAndGlyphs" font-family="Liberation Sans, sans-serif" font-weight="bold" font-size="5.289999999999999" fill="#f4f4f0" stroke="#f4f4f0" stroke-width=".35">PERO</text><text x="38" y="15.5" textLength="11" lengthAdjust="spacingAndGlyphs" font-family="Liberation Sans, sans-serif" font-weight="bold" font-size="5.289999999999999" fill="#1a1a10" stroke="#1a1a10" stroke-width="1.1" stroke-linejoin="round" opacity=".75">ELLAS</text><text x="38" y="15.5" textLength="11" lengthAdjust="spacingAndGlyphs" font-family="Liberation Sans, sans-serif" font-weight="bold" font-size="5.289999999999999" fill="#f0ec20" stroke="#f0ec20" stroke-width=".35">ELLAS</text><text x="19" y="21.5" textLength="38" lengthAdjust="spacingAndGlyphs" font-family="Liberation Sans, sans-serif" font-weight="bold" font-size="5.289999999999999" fill="#1a1a10" stroke="#1a1a10" stroke-width="1.1" stroke-linejoin="round" opacity=".75">LO HACEN PERDERSE!</text><text x="19" y="21.5" textLength="38" lengthAdjust="spacingAndGlyphs" font-family="Liberation Sans, sans-serif" font-weight="bold" font-size="5.289999999999999" fill="#f0ec20" stroke="#f0ec20" stroke-width=".35">LO HACEN PERDERSE!</text><path d="M38 26 L47 27 L46 32 L39 31Z" fill="#3c9a4c"/><path d="M38 26 L45 29.500 L39 31Z" fill="#e0303c"/><path d="M42 30 L46 29.500 L46 32 L40 31.200Z" fill="#3a8ad0"/></svg></div>
<span class="t row" style="letter-spacing:-0.420px;transform:scaleX(0.9380);top:600.65px;left:1037px">ASÍ ES ERITREA - ¡EL PAÍS MÁS EXTRAÑ...</span>
<div class="bar" style="left:1379px;top:604.2px;width:101.8px"></div>
<span class="t val" style="letter-spacing:-0.420px;transform:scaleX(0.9608);top:600.65px;left:1493.7px">2,44 R$</span>
<div class="thumb" style="left:966.7px;top:633.1px;height:33.6px"><svg style="left:0;top:0" width="59" height="33.6" viewBox="0 0 59 33.6" preserveAspectRatio="none"><rect width="59" height="33.600" fill="#a09890"/><rect x="0" y="0" width="30" height="12" fill="#a6c6ea"/><rect x="28" y="0" width="31" height="18" fill="#cdbc94"/><rect x="33" y="3" width="3" height="5" fill="#8a7a5c"/><rect x="40" y="3" width="3" height="5" fill="#8a7a5c"/><rect x="47" y="3" width="3" height="5" fill="#8a7a5c"/><rect x="54" y="3" width="3" height="5" fill="#8a7a5c"/><path d="M0 6 L6 4 L6 20 L0 20Z" fill="#c86a3c"/><ellipse cx="25" cy="6" rx="5" ry="5" fill="#4c7c3a"/><ellipse cx="4" cy="12" rx="4" ry="5" fill="#4c7c3a"/><rect x="18" y="18" width="41" height="5" fill="#5a6068"/><rect x="20" y="19" width="10" height="4" rx="1.500" fill="#d8d050"/><rect x="44" y="19" width="12" height="4" rx="1.500" fill="#8a9aa8"/><path d="M0 24 H59 V33.600 H0Z" fill="#a8a098"/><path d="M7 2 Q13 0 15 6 L16 16 L12 16 L8 10Z" fill="#1c1a1e"/><ellipse cx="9" cy="6" rx="2" ry="2.800" fill="#7a4c38"/><path d="M5 10 Q9 7 14 10 L15 19 L5 20Z" fill="#2f6082"/><ellipse cx="10.500" cy="24" rx="6.500" ry="6" fill="#dcd4d0"/><path d="M6 29 L10 29 L9.500 33.600 H6.500Z M11 29 L15 29 L14 33.600 H11.500Z" fill="#9a6a50"/><text x="22" y="14" textLength="29" lengthAdjust="spacingAndGlyphs" font-family="Liberation Sans, sans-serif" font-weight="bold" font-size="6.8999999999999995" fill="#1a1a10" stroke="#1a1a10" stroke-width="1.1" stroke-linejoin="round" opacity=".75">ASI ES CUBA</text><text x="22" y="14" textLength="29" lengthAdjust="spacingAndGlyphs" font-family="Liberation Sans, sans-serif" font-weight="bold" font-size="6.8999999999999995" fill="#f4f4f0" stroke="#f4f4f0" stroke-width=".35">ASI ES CUBA</text><text x="20" y="21" textLength="36" lengthAdjust="spacingAndGlyphs" font-family="Liberation Sans, sans-serif" font-weight="bold" font-size="6.8999999999999995" fill="#1a1a10" stroke="#1a1a10" stroke-width="1.1" stroke-linejoin="round" opacity=".75">¡SIN CENSURA!</text><text x="20" y="21" textLength="36" lengthAdjust="spacingAndGlyphs" font-family="Liberation Sans, sans-serif" font-weight="bold" font-size="6.8999999999999995" fill="#f0ec20" stroke="#f0ec20" stroke-width=".35">¡SIN CENSURA!</text><path d="M34 25 L44 24 L45 31 L35 32Z" fill="#f0f0f4"/><path d="M34 25 L44 24 L44.300 25.800 L34.300 26.800Z M34.600 28.200 L44.600 27.200 L44.800 29 L34.800 30Z" fill="#2a4ab0"/><path d="M34 25 L38.500 28.300 L35 32Z" fill="#d8283c"/><path d="M46 26 L52 24 L54 33 L50 33Z" fill="#c87848"/></svg></div>
<span class="t row" style="letter-spacing:-0.420px;transform:scaleX(0.9569);top:642.35px;left:1037px">ASÍ ES CUBA EN 2024 ➣ ¡LA DURA REA...</span>
<div class="bar" style="left:1395.8px;top:645.9px;width:85.0px"></div>
<span class="t val" style="letter-spacing:-0.420px;transform:scaleX(0.9608);top:642.35px;left:1493.7px">2,03 R$</span>
<div class="thumb" style="left:966.7px;top:674.8px;height:33.6px"><svg style="left:0;top:0" width="59" height="33.6" viewBox="0 0 59 33.6" preserveAspectRatio="none"><defs><linearGradient id="t5" x1="0" y1="0" x2="1" y2="1"><stop offset="0" stop-color="#9a5cc0"/><stop offset=".35" stop-color="#e890a0"/><stop offset=".6" stop-color="#f0a848"/><stop offset="1" stop-color="#a06028"/></linearGradient></defs><rect width="59" height="33.600" fill="url(#t5)"/><path d="M30 0 H59 V14 L44 8Z" fill="#7a8ad8"/><path d="M18 26 L19 8 L20.500 2 L22 8 L23 26Z M24 26 L25 8 L26.500 2 L28 8 L29 26Z" fill="#ecc888"/><rect x="0" y="27" width="59" height="6.600" fill="#5a5a20"/><path d="M14 27 Q30 24 59 28 V33.600 H14Z" fill="#c07820"/><path d="M42 0 H59 V10 L42 7Z" fill="#e8e8f0"/><path d="M42 1.500 L59 3 V4.500 L42 3Z M42 4.500 L59 6.500 V8 L42 6Z" fill="#d8283c"/><path d="M42 0 H50 V6 L42 5.500Z" fill="#28307c"/><circle cx="46" cy="3" r="1.700" fill="#f0d020"/><path d="M1 12 Q2 1 9 1 Q16 2 15 12 L17 24 L12 26 L2 24Z" fill="#44286c"/><ellipse cx="9" cy="10" rx="4.400" ry="5.600" fill="#d8a890"/><path d="M5 16 H13 L12 21 H6Z" fill="#d0a088"/><path d="M2 33.600 L3 22 Q9 17 15 22 L17 33.600Z" fill="#7c2c94"/><path d="M0 18 L4 19 L3 33.600 H0Z" fill="#d0a088"/><text x="22" y="18.5" textLength="30" lengthAdjust="spacingAndGlyphs" font-family="Liberation Sans, sans-serif" font-weight="bold" font-size="6.8999999999999995" fill="#1a1a10" stroke="#1a1a10" stroke-width="1.1" stroke-linejoin="round" opacity=".75">¡NO VEAS SI</text><text x="22" y="18.5" textLength="30" lengthAdjust="spacingAndGlyphs" font-family="Liberation Sans, sans-serif" font-weight="bold" font-size="6.8999999999999995" fill="#f4f4f0" stroke="#f4f4f0" stroke-width=".35">¡NO VEAS SI</text><text x="17" y="26.5" textLength="40" lengthAdjust="spacingAndGlyphs" font-family="Liberation Sans, sans-serif" font-weight="bold" font-size="6.8999999999999995" fill="#1a1a10" stroke="#1a1a10" stroke-width="1.1" stroke-linejoin="round" opacity=".75">ESTÁS CASADO!</text><text x="17" y="26.5" textLength="40" lengthAdjust="spacingAndGlyphs" font-family="Liberation Sans, sans-serif" font-weight="bold" font-size="6.8999999999999995" fill="#f0ec20" stroke="#f0ec20" stroke-width=".35">ESTÁS CASADO!</text></svg></div>
<span class="t row" style="letter-spacing:-0.420px;transform:scaleX(0.9595);top:684.05px;left:1037px">¡ESTO ES LA VIDA EN MALASIA! ¡AQUÍ P...</span>
<div class="bar" style="left:1423px;top:687.6px;width:57.8px"></div>
<span class="t val" style="letter-spacing:-0.420px;transform:scaleX(0.9608);top:684.05px;left:1493.7px">1,38 R$</span>
<div class="btn" style="left:966.3px;top:746px;width:91px;height:37px"></div>
<span class="t" style="letter-spacing:-0.339px;top:756.88px;left:983.2px;font-size:15.5px;-webkit-text-stroke:.58px">Ver mais</span>

<div class="abs" id="taskbar"></div>
<!-- weather -->
<svg style="left:22px;top:856px" width="30" height="34" viewBox="0 0 30 34"><defs><linearGradient id="sun" x1="0" y1="0" x2="1" y2="1"><stop offset="0" stop-color="#ffc83a"/><stop offset="1" stop-color="#f08a1c"/></linearGradient><linearGradient id="cld" x1="0" y1="0" x2="0" y2="1"><stop offset="0" stop-color="#e6effc"/><stop offset="1" stop-color="#9dbcee"/></linearGradient></defs><circle cx="11.500" cy="17" r="10" fill="url(#sun)"/><path d="M7 30.600 A4.300 4.300 0 0 1 7.400 22 A6.200 6.200 0 0 1 18.800 21.200 A4.800 4.800 0 0 1 19.600 30.600Z" fill="url(#cld)"/><circle cx="18.500" cy="8.500" r="7.900" fill="#c42b1c"/><text x="18.500" y="12.800" text-anchor="middle" font-family="Liberation Sans, sans-serif" font-weight="bold" font-size="12" fill="#fff">4</text></svg>
<span class="t tk" style="letter-spacing:-0.344px;transform:scaleX(0.9653);top:860.99px;left:53.8px;font-size:12.3px">34°C</span>
<span class="t tk" style="letter-spacing:-0.064px;top:877.29px;left:53.7px;font-size:12.3px;color:#5a5a5a">Parc ensolarado</span>
<!-- start -->
<svg style="left:419px;top:863px" width="24.5" height="24.5" viewBox="0 0 24.5 24.5"><defs><linearGradient id="win" x1="0" y1="0" x2="1" y2="1"><stop offset="0" stop-color="#57c8f5"/><stop offset="1" stop-color="#0a6bc9"/></linearGradient></defs><path d="M0 0 H11.6 V11.6 H0Z M12.9 0 H24.5 V11.6 H12.9Z M0 12.9 H11.6 V24.5 H0Z M12.9 12.9 H24.5 V24.5 H12.9Z" fill="url(#win)"/></svg>
<div class="abs" id="tsearch"></div>
<svg style="left:469px;top:867px" width="17" height="17" viewBox="0 0 17 17"><circle cx="7" cy="7" r="5.6" fill="none" stroke="#222" stroke-width="1.7"/><path d="M11.2 11.2 L15.6 15.6" stroke="#222" stroke-width="1.9" stroke-linecap="round"/></svg>
<span class="t" style="letter-spacing:-0.420px;transform:scaleX(0.9615);left:495px;top:868px;font-size:15px;color:#5c5c5c">Pesquisar</span>
<!-- search highlight art -->
<svg style="left:634px;top:860px" width="50" height="30" viewBox="0 0 50 30"><path d="M0.300 28.800 Q1 25 6.500 23.200 L10 22.200 H15 L20 23.600 Q24.500 25.600 24.900 28.800Z" fill="#7c2d31"/><path d="M6.800 22.800 Q11.500 28.500 17.600 22.800 L16.600 21 H8Z" fill="#f0e6cf"/><path d="M8.600 18 H16 V23 Q12.300 26.500 8.600 23Z" fill="#e2b896"/><path d="M2.600 10 Q1.600 3.400 8 2.400 Q12 0.800 16 2.800 Q20.400 4.400 19.800 10 Q20.600 14.500 18.400 16.600 L17.200 11 Q12 6 7.400 7.600 L6 16.600 Q2.800 14.500 2.600 10Z" fill="#a3a3a3"/><path d="M4 6 Q8 3 12 4 M10 3 Q15 3.500 18 8" stroke="#c9c9c9" stroke-width="1" fill="none"/><ellipse cx="12" cy="14.200" rx="5.900" ry="8" fill="#ecc6a6"/><path d="M6.200 11 Q8 6.600 12 6.800 Q16.400 6.800 17.800 11 Q14.500 8.600 12 8.800 Q9 8.800 6.200 11Z" fill="#a3a3a3"/><circle cx="9.600" cy="12.600" r=".9" fill="#5b9bd0"/><circle cx="14.600" cy="12.600" r=".9" fill="#5b9bd0"/><path d="M10.600 18.400 Q12 19.200 13.600 18.400" stroke="#c0806a" stroke-width=".8" fill="none"/><path d="M27.200 14.200 L22 20" stroke="#5a3c1e" stroke-width="2.200" stroke-linecap="round"/><path d="M28.400 12.800 L26 15.500" stroke="#e0aa20" stroke-width="2.200"/><circle cx="31.500" cy="9.600" r="4.900" fill="#d9f4f8" stroke="#5a5350" stroke-width="1.300"/><path d="M30.700 16.500 L34.500 14.600 V28.800 H30.700Z" fill="#24788c"/><path d="M34.500 14.500 L37.500 13.200 V28.800 H34.500Z" fill="#e9a443"/><path d="M37.500 13 L39.300 12.800 V28.800 H37.500Z" fill="#2b8c55"/><path d="M39.300 12.800 L42.500 13.400 V28.400 L39.300 28.800Z" fill="#d2762f"/><path d="M42.500 13.600 L45.800 14.600 V26.500 L42.500 28.400Z" fill="#c0452f"/><path d="M31.600 18 H33.600 M31.600 26 H33.600 M35.200 17 H36.800 M40 16 H41.800 M43.200 17 H45" stroke="#f0d060" stroke-width=".8"/></svg>
<!-- task view -->
<svg style="left:698px;top:862px" width="27" height="25" viewBox="0 0 27 25"><rect x="7.300" y="1.200" width="18.400" height="15.800" rx="2" fill="#f4f4f4"/><rect x="1" y="7.500" width="18.800" height="16.800" rx="2" fill="#202020"/><rect x="7.300" y="7.500" width="12.500" height="9.500" fill="#b4b4b4"/></svg>
<!-- copilot -->
<svg style="left:745px;top:862.700px" width="25" height="23" viewBox="0 0 25 23"><defs><linearGradient id="cp1" x1="0.300" y1="0" x2="0" y2="1"><stop offset="0" stop-color="#2272e0"/><stop offset=".35" stop-color="#2fb0d8"/><stop offset=".6" stop-color="#58c878"/><stop offset=".85" stop-color="#f2c61e"/><stop offset="1" stop-color="#f08a2a"/></linearGradient><linearGradient id="cp2" x1="0.700" y1="0" x2="0.200" y2="1"><stop offset="0" stop-color="#a65ce8"/><stop offset=".4" stop-color="#e85cc0"/><stop offset=".75" stop-color="#f46a6a"/><stop offset="1" stop-color="#f58a34"/></linearGradient></defs><path d="M6.500 0.400 H15 Q18 0.400 18.600 3.600 L19.200 7 H15 Q12.600 7 12 9.400 L9.600 19 Q8.800 22.600 5.800 22.600 Q2.400 22.600 1 19 Q0 16 1 12 L3 3.800 Q3.800 0.400 6.500 0.400Z" fill="url(#cp1)"/><path d="M19 22.600 H10.500 Q7.500 22.600 6.900 19.400 L6.300 16 H10.500 Q12.900 16 13.500 13.600 L15.900 4 Q16.700 0.400 19.700 0.400 Q22.600 0.400 24 4 Q25 7 24 11 L22 19.200 Q21.200 22.600 19 22.600Z" fill="url(#cp2)"/><path d="M12 9.400 L13.500 13.600" stroke="#fff" stroke-width="1.200" opacity=".7"/></svg>
<!-- chrome 1 -->
<svg style="left:790px;top:862px" width="26" height="26" viewBox="0 0 26 26"><g id="chromeico"><circle cx="13" cy="13" r="12.5" fill="#fff"/><path d="M13 13 L2.2 6.75 A12.5 12.5 0 0 1 23.8 6.75Z" fill="#e33b2e"/><path d="M13 13 L23.8 6.75 A12.5 12.5 0 0 1 13 25.5Z" fill="#fcc934"/><path d="M13 13 L13 25.5 A12.5 12.5 0 0 1 2.2 6.75Z" fill="#2ba14b"/><circle cx="13" cy="13" r="5.8" fill="#fff"/><circle cx="13" cy="13" r="4.6" fill="#4285f4"/></g></svg>
<svg style="left:805px;top:857px" width="16" height="16" viewBox="0 0 16 16"><circle cx="8" cy="8" r="7.6" fill="#fafafa" stroke="#cfcfcf" stroke-width=".6"/><rect x="3" y="4.6" width="10" height="1.6" fill="#d24a43"/><rect x="5" y="9.6" width="6" height="1.4" fill="#e68b86"/></svg>
<div class="abs" style="left:799.5px;top:891.7px;width:7px;height:3px;border-radius:1.5px;background:#7d7d7d"></div>
<!-- edge -->
<svg style="left:836px;top:862px" width="26" height="26" viewBox="0 0 26 26"><defs><linearGradient id="ed1" x1="0" y1="0" x2="1" y2="1"><stop offset="0" stop-color="#35c1f1"/><stop offset="1" stop-color="#0c59a4"/></linearGradient><linearGradient id="ed2" x1="0" y1="0" x2="1" y2="0"><stop offset="0" stop-color="#1b9de2"/><stop offset="1" stop-color="#5ddc7a"/></linearGradient></defs><circle cx="13" cy="13" r="12.6" fill="url(#ed1)"/><path d="M1 11 A12.4 12.4 0 0 1 25.4 12 Q25.6 18 19 18 Q15 18 15.6 15 Q16.4 12 13 11 Q8 10 4 14 Q1.6 17 3 21 Q0 16 1 11Z" fill="url(#ed2)"/><path d="M9 14 Q7 20 13 24.5 Q17 25 20 22 Q13 23 11.6 18 Q11 15.6 13 13.6Z" fill="#0b4f99" opacity=".7"/><path d="M10.500 15.500 Q11 11.800 15 11.600 Q19.500 12 20.500 16 Q20.500 18.600 17 18.800 Q14.500 18.600 15.200 16 Q15.400 13.600 13.400 13.400 Q11.400 13.600 10.500 15.500Z" fill="#e8f5fb" opacity=".92"/></svg>
<!-- store -->
<svg style="left:881px;top:860px" width="27" height="29" viewBox="0 0 27 29"><path d="M8.5 7 V5 A2.4 2.4 0 0 1 10.9 2.6 H16.1 A2.4 2.4 0 0 1 18.500 5 V7" fill="none" stroke="#2d9ae6" stroke-width="1.9"/><path d="M1 7.5 H26 V23.5 A3.500 3.500 0 0 1 22.5 27 H4.5 A3.500 3.500 0 0 1 1 23.5Z" fill="#174e94"/><rect x="8.600" y="11.2" width="4.4" height="4.4" fill="#f25022"/><rect x="14" y="11.2" width="4.4" height="4.4" fill="#7fba00"/><rect x="8.600" y="16.6" width="4.4" height="4.4" fill="#00a4ef"/><rect x="14" y="16.6" width="4.4" height="4.4" fill="#ffb900"/></svg>
<!-- explorer -->
<svg style="left:927px;top:863px" width="27" height="24" viewBox="0 0 27 24"><path d="M1 3 A2 2 0 0 1 3 1 H10 L13 4 H24 A2 2 0 0 1 26 6 V8 H1Z" fill="#e8a41c"/><path d="M1 7 H26 V21 A2 2 0 0 1 24 23 H3 A2 2 0 0 1 1 21Z" fill="#fbcf47"/><path d="M6 17 H21 V23 H6Z" fill="#2a8ad8"/><rect x="9.500" y="19" width="8" height="1.6" rx=".8" fill="#134f8f"/></svg>
<div class="abs" style="left:937.500px;top:891.7px;width:7px;height:3px;border-radius:1.5px;background:#7d7d7d"></div>
<!-- outlook -->
<svg style="left:973px;top:862px" width="27" height="26" viewBox="0 0 27 26"><path d="M9 3 L20 1 L26 5 V20 L20 24 H9Z" fill="#1e8ee0"/><path d="M14 9 L26 5 V20 L14 23Z" fill="#35b3f0"/><path d="M9 14 L26 8 V20 A3 3 0 0 1 23 23 H9Z" fill="#1068b8" opacity=".8"/><rect x="0.500" y="7" width="14" height="14" rx="2" fill="#0f5fb0"/><ellipse cx="7.500" cy="14" rx="3.600" ry="4.200" fill="none" stroke="#fff" stroke-width="2"/></svg>
<!-- capcut -->
<svg style="left:1021px;top:864px" width="23" height="22" viewBox="0 0 23 22"><rect width="23" height="22" rx="4.500" fill="#fff"/><path d="M5 6.400 H14.800 L19 9 M5 15.600 H14.800 L19 13 M5 6.400 L18.400 15 M5 15.600 L18.400 7" fill="none" stroke="#111" stroke-width="2" stroke-linejoin="round"/></svg>
<!-- telegram -->
<svg style="left:1066px;top:863px" width="24" height="24" viewBox="0 0 24 24"><circle cx="12" cy="12" r="11.800" fill="#2a9fd9"/><path d="M5 11.800 L18.400 6.400 L16 18 L11.800 14.800 L9.800 17 L9.400 13.600 L15.600 8.600 L8 12.800Z" fill="#fff"/></svg>
<!-- green monitor -->
<svg style="left:1110px;top:868px" width="28" height="15" viewBox="0 0 28 15"><rect x="0.700" y="0.700" width="19" height="10.600" rx="1" fill="none" stroke="#79b26a" stroke-width="1.300"/><path d="M6 14 H14.500 M10.200 11.400 V14" stroke="#79b26a" stroke-width="1.300"/><rect x="22" y="2.500" width="3.600" height="8" rx="1" fill="none" stroke="#a9a9a9" stroke-width="1"/><text x="10.200" y="9.200" text-anchor="middle" font-family="Liberation Sans, sans-serif" font-size="7.500" fill="#7fb571">x10</text></svg>
<div class="abs" style="left:1120.4px;top:891.7px;width:7px;height:3px;border-radius:1.5px;background:#7d7d7d"></div>
<!-- active chrome -->
<div class="abs" style="left:1149.500px;top:855.5px;width:40.500px;height:39.500px;border-radius:5px;background:#f0f0f0;border:1px solid #e6e6e6"></div>
<svg style="left:1157px;top:863px" width="25" height="25" viewBox="0 0 26 26"><use href="#chromeico"/></svg>
<svg style="left:1170px;top:857px" width="17" height="17" viewBox="0 0 17 17"><defs><clipPath id="avc3"><circle cx="8.500" cy="8.500" r="8.300"/></clipPath></defs><g clip-path="url(#avc3)"><rect width="17" height="17" fill="#8f7f74"/><path d="M0 0 H9 L6 17 H0Z" fill="#4b5560"/><path d="M9 0 H17 V17 H10Z" fill="#c8b7a4"/><rect x="7" y="3" width="3" height="10" fill="#6e3428"/></g></svg>
<div class="abs" style="left:1162px;top:891.7px;width:15.600px;height:3.200px;border-radius:1.6px;background:#1a6fc4"></div>
<!-- tray -->
<svg style="left:1392px;top:871px" width="12" height="8" viewBox="0 0 12 8"><path d="M0.800 7 L6 1.400 L11.200 7" fill="none" stroke="#1b1b1b" stroke-width="1.400"/></svg>
<svg style="left:1422px;top:867px" width="19" height="16" viewBox="0 0 19 16"><path d="M4.600 13.400 A3.600 3.600 0 0 1 4.400 6.400 A5 5 0 0 1 13.800 5.400 A4 4 0 0 1 14.800 13.400Z" fill="#9a9a9a" stroke="#2a2a2a" stroke-width="1.200"/><path d="M2 1.400 L16.600 14.800" stroke="#2a2a2a" stroke-width="1.300"/></svg>
<svg style="left:1456px;top:866px" width="18" height="18" viewBox="0 0 18 18"><path d="M11 1.600 H1.600 A1 1 0 0 0 0.600 2.600 V11.400 A1 1 0 0 0 1.600 12.400 H13.400 V8.600" fill="none" stroke="#2a2a2a" stroke-width="1.100"/><path d="M4 16 H11 M7.500 12.400 V16" stroke="#2a2a2a" stroke-width="1.100"/><rect x="13.400" y="0.600" width="3.400" height="5.400" rx="1.200" fill="none" stroke="#2a2a2a" stroke-width="1.100"/><path d="M15.100 6 V16 H12.400" fill="none" stroke="#2a2a2a" stroke-width="1.100"/></svg>
<svg style="left:1481px;top:868px" width="16" height="14" viewBox="0 0 16 14"><path d="M0.800 4.600 H3.400 L7 1.200 V12.800 L3.400 9.400 H0.800Z" fill="none" stroke="#2a2a2a" stroke-width="1.100" stroke-linejoin="round"/><path d="M9 4.600 Q10.600 7 9 9.400 M11 2.800 Q13.600 7 11 11.200" fill="none" stroke="#2a2a2a" stroke-width="1.100"/><path d="M13 1.200 Q16.400 7 13 12.800" fill="none" stroke="#b5b5b5" stroke-width="1.100"/></svg>
<span class="t tk" style="letter-spacing:-0.256px;left:1550px;top:860.500px;font-size:12.500px">14:09</span>
<span class="t tk" style="letter-spacing:0.194px;left:1515.500px;top:877.500px;font-size:12.500px">15/09/2025</span>

</body>
</html>
